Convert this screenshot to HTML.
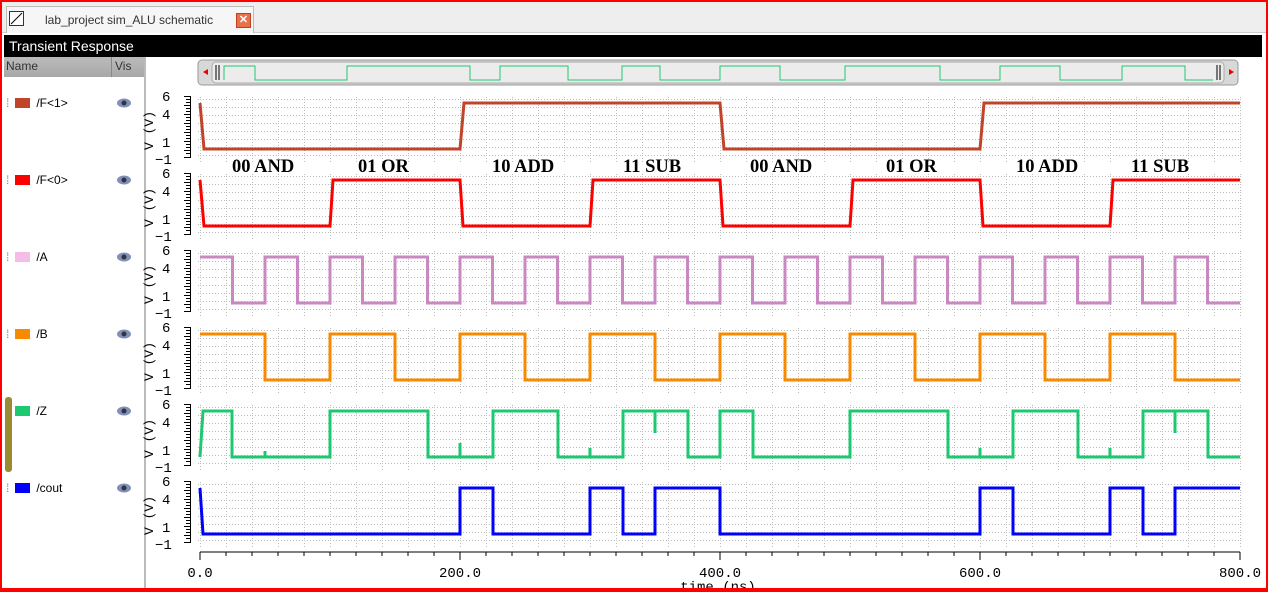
<!DOCTYPE html>
<html><head><style>
body{margin:0;width:1268px;height:592px;overflow:hidden;background:#fff;font-family:"Liberation Sans",sans-serif;position:relative}
.frame{position:absolute;left:0;top:0;width:1264px;height:588px;border:2px solid #f00}
.tabbar{position:absolute;left:2px;top:2px;width:1264px;height:30px;background:#eeeeee;border-bottom:1px solid #ccc}
.tab{position:absolute;left:4px;top:4px;width:246px;height:26px;background:#f6f6f6;border:1px solid #bbb;border-bottom:none}
.title{position:absolute;left:4px;top:35px;width:1258px;height:22px;background:#000;color:#fff;font-size:14px;line-height:22px;padding-left:5px;box-sizing:border-box}
.left{position:absolute;left:4px;top:57px;width:140px;height:533px;background:#fff;border-right:2px solid #bbb}
.hdr{position:absolute;left:0;top:0;width:140px;height:20px;background:linear-gradient(#bbb,#a8a8a8);font-size:12px;color:#333}
.item{position:absolute;left:6px;font-size:12px;color:#000}
.sw{display:inline-block;width:15px;height:10px;margin:0 6px 0 6px;vertical-align:-1px}
</style></head><body>
<div class="frame"></div>
<div class="tabbar"><div class="tab">
<div style="position:absolute;left:2px;top:4px;width:13px;height:13px;border:1px solid #333;background:#fff"><svg width="13" height="13"><path d="M1 12 L12 1" stroke="#000"/></svg></div>
<div style="position:absolute;left:38px;top:6px;font-size:12px;color:#333">lab_project sim_ALU schematic</div>
<div style="position:absolute;left:229px;top:6px;width:13px;height:13px;background:#e8704a;border:1px solid #c04020;color:#fff;font-size:11px;line-height:12px;text-align:center;font-weight:bold">✕</div>
</div></div>
<div class="title">Transient Response</div>
<div class="left">
<div class="hdr"><span style="position:absolute;left:2px;top:2px">Name</span><span style="position:absolute;left:107px;top:0;height:20px;border-left:1px solid #888"></span><span style="position:absolute;left:111px;top:2px">Vis</span></div>
<div style="position:absolute;left:1px;top:340px;width:7px;height:75px;background:#9a8a30;border-radius:3px"></div>
</div>
<div class="item" style="top:96px"><span style="color:#888">⁞</span><span class="sw" style="background:#c0442a"></span>/F&lt;1&gt;</div>
<div class="item" style="top:173px"><span style="color:#888">⁞</span><span class="sw" style="background:#f00"></span>/F&lt;0&gt;</div>
<div class="item" style="top:250px"><span style="color:#888">⁞</span><span class="sw" style="background:#f4bde8"></span>/A</div>
<div class="item" style="top:327px"><span style="color:#888">⁞</span><span class="sw" style="background:#f88a00"></span>/B</div>
<div class="item" style="top:404px"><span style="color:#888">⁞</span><span class="sw" style="background:#1ec870"></span>/Z</div>
<div class="item" style="top:481px"><span style="color:#888">⁞</span><span class="sw" style="background:#00f"></span>/cout</div>
<svg style="position:absolute;left:0;top:0" width="1268" height="592">
<defs>
<pattern id="g" x="200" y="99" width="26" height="8" patternUnits="userSpaceOnUse">
<line x1="0" y1="0.5" x2="26" y2="0.5" stroke="#bbb" stroke-dasharray="1 2"/>
<line x1="0.5" y1="0" x2="0.5" y2="8" stroke="#bbb" stroke-dasharray="1 2"/>
</pattern>
<g id="eye"><ellipse cx="0" cy="0" rx="7" ry="4.5" fill="#8090b8"/><circle cx="0" cy="0" r="2.5" fill="#334"/></g>
</defs>
<use href="#eye" x="124" y="103"/><use href="#eye" x="124" y="180"/><use href="#eye" x="124" y="257"/><use href="#eye" x="124" y="334"/><use href="#eye" x="124" y="411"/><use href="#eye" x="124" y="488"/>
<rect x="198" y="60" width="1040" height="25" rx="4" fill="#d8d8d8" stroke="#999"/>
<rect x="212" y="62" width="1012" height="21" rx="4" fill="#ececec" stroke="#aaa"/>
<path d="M203 72 L208 69 V75Z" fill="#e00"/><path d="M1234 72 L1229 69 V75Z" fill="#e00"/>
<path d="M216 65V80M219 65V80M1217 65V80M1220 65V80" stroke="#000"/>
<path d="M224 80 V66 H255 V80 H347 V66 H470 V80 H500 V66 H568 V80 H622 V66 H660 V80 H720 V66 H780 V80 H845 V66 H940 V80 H1000 V66 H1060 V80 H1122 V66 H1185 V80 H1213" stroke="#1ec870" fill="none"/>
<g id="ax">
<rect x="198" y="97" width="1043" height="66" fill="url(#g)"/>
<text x="162" y="101" font-family="Liberation Mono" font-size="14">6</text>
<text x="162" y="119" font-family="Liberation Mono" font-size="14">4</text>
<text x="162" y="147" font-family="Liberation Mono" font-size="14">1</text>
<text x="155" y="164" font-family="Liberation Mono" font-size="14">−1</text>
<text transform="translate(153,150) rotate(-90)" font-family="Liberation Mono" font-size="13">V (V)</text>
<path d="M190.5 96 V158 M184 96.5 H190 M186 99.5H190 M186 102.5H190 M184 105.5H190 M186 108.5H190 M186 111.5H190 M184 114.5H190 M186 117.5H190 M186 120.5H190 M184 123.5H190 M186 126.5H190 M186 129.5H190 M184 132.5H190 M186 135.5H190 M186 138.5H190 M184 141.5H190 M186 144.5H190 M186 147.5H190 M184 150.5H190 M186 153.5H190 M184 157.5H190" stroke="#000" stroke-width="1" fill="none"/>
</g>
<use href="#ax" y="77"/><use href="#ax" y="154"/><use href="#ax" y="231"/><use href="#ax" y="308"/><use href="#ax" y="385"/>
<g fill="none" stroke-width="3">
<path stroke="#c0442a" d="M200,103 L204,149 H460 L464,103 H720 L724,149 H980 L984,103 H1240"/>
<path transform="translate(0,77)" stroke="#f00" d="M200,103 L204,149 H330 L333,103 H460 L463,149 H590 L593,103 H720 L723,149 H850 L853,103 H980 L983,149 H1110 L1113,103 H1240"/>
<path transform="translate(0,154)" stroke="#c888c0" d="M200,103 H232.5 V149 H265 V103 H297.5 V149 H330 V103 H362.5 V149 H395 V103 H427.5 V149 H460 V103 H492.5 V149 H525 V103 H557.5 V149 H590 V103 H622.5 V149 H655 V103 H687.5 V149 H720 V103 H752.5 V149 H785 V103 H817.5 V149 H850 V103 H882.5 V149 H915 V103 H947.5 V149 H980 V103 H1012.5 V149 H1045 V103 H1077.5 V149 H1110 V103 H1142.5 V149 H1175 V103 H1207.5 V149 H1240"/>
<path transform="translate(0,231)" stroke="#f88a00" d="M200,103 H265 V149 H330 V103 H395 V149 H460 V103 H525 V149 H590 V103 H655 V149 H720 V103 H785 V149 H850 V103 H915 V149 H980 V103 H1045 V149 H1110 V103 H1175 V149 H1240"/>
<path transform="translate(0,308)" stroke="#1ec870" d="M200,149 L203,103 H232 V149 H265 V143 V149 H330 V103 H428 V149 H460 V135 V149 H493 V103 H558 V149 H590 V140 V149 H623 V103 H655 V125 V103 H688 V149 H720 V103 H753 V149 H850 V103 H948 V149 H980 V140 V149 H1013 V103 H1078 V149 H1110 V140 V149 H1143 V103 H1175 V125 V103 H1208 V149 H1240"/>
<path transform="translate(0,385)" stroke="#00f" d="M200,103 L203,149 H460 V103 H493 V149 H590 V103 H623 V149 H655 V103 H720 V149 H980 V103 H1013 V149 H1110 V103 H1143 V149 H1175 V103 H1240"/>
</g>
<g font-family="Liberation Serif" font-weight="bold" font-size="18.5" fill="#000">
<text x="232" y="172">00 AND</text><text x="358" y="172">01 OR</text><text x="492" y="172">10 ADD</text><text x="623" y="172">11 SUB</text>
<text x="750" y="172">00 AND</text><text x="886" y="172">01 OR</text><text x="1016" y="172">10 ADD</text><text x="1131" y="172">11 SUB</text>
</g>
<path d="M200 552 H1240 M200 552V560 M226 552V556 M252 552V556 M278 552V556 M304 552V556 M330 552V556 M356 552V556 M382 552V556 M408 552V556 M434 552V556 M460 552V560 M486 552V556 M512 552V556 M538 552V556 M564 552V556 M590 552V556 M616 552V556 M642 552V556 M668 552V556 M694 552V556 M720 552V560 M746 552V556 M772 552V556 M798 552V556 M824 552V556 M850 552V556 M876 552V556 M902 552V556 M928 552V556 M954 552V556 M980 552V560 M1006 552V556 M1032 552V556 M1058 552V556 M1084 552V556 M1110 552V556 M1136 552V556 M1162 552V556 M1188 552V556 M1214 552V556 M1240 552V560" stroke="#000" fill="none"/>
<g font-family="Liberation Mono" font-size="14" text-anchor="middle">
<text x="200" y="577">0.0</text><text x="460" y="577">200.0</text><text x="720" y="577">400.0</text><text x="980" y="577">600.0</text><text x="1240" y="577">800.0</text>
<text x="718" y="591">time (ns)</text>
</g>
</svg>
<div style="position:absolute;left:0;top:588px;width:1268px;height:4px;background:#f00"></div>
</body></html>
